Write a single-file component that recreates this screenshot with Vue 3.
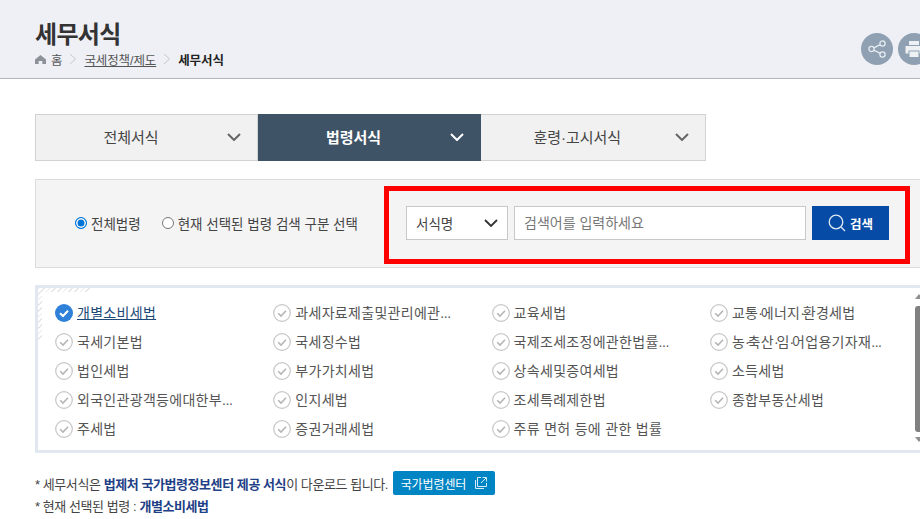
<script setup>
const split = (s) => s.split(/(·|\.\.\.)/).filter(Boolean)
const laws = [
  { name: '개별소비세법', on: true },
  { name: '과세자료제출및관리에관...' },
  { name: '교육세법' },
  { name: '교통·에너지·환경세법' },
  { name: '국세기본법' },
  { name: '국세징수법' },
  { name: '국제조세조정에관한법률...' },
  { name: '농·축산·임·어업용기자재...' },
  { name: '법인세법' },
  { name: '부가가치세법' },
  { name: '상속세및증여세법' },
  { name: '소득세법' },
  { name: '외국인관광객등에대한부...' },
  { name: '인지세법' },
  { name: '조세특례제한법' },
  { name: '종합부동산세법' },
  { name: '주세법' },
  { name: '증권거래세법' },
  { name: '주류 면허 등에 관한 법률' },
].map((l) => ({ ...l, parts: split(l.name) }))
const tabs = [
  { name: '전체서식' },
  { name: '법령서식', on: true },
  { name: '훈령·고시서식' },
]
</script>

<template>
  <div class="page">
    <header class="top">
      <div class="top-text">
        <h1 class="title">세무서식</h1>
        <nav class="crumbs">
          <svg class="home" viewBox="0 0 12 12" width="11" height="11"><path d="M6 1 L12 6 V11 H8 V7.5 H4 V11 H0 V6 Z" fill="#8d9298" /></svg>
          <span class="crumb">홈</span>
          <svg class="sep" viewBox="0 0 8 12" width="8" height="12"><path d="M1 1 L6.5 6 L1 11" fill="none" stroke="#c4c7cc" /></svg>
          <a class="crumb link">국세정책/제도</a>
          <svg class="sep" viewBox="0 0 8 12" width="8" height="12"><path d="M1 1 L6.5 6 L1 11" fill="none" stroke="#c4c7cc" /></svg>
          <strong class="crumb current">세무서식</strong>
        </nav>
      </div>
      <div class="top-actions">
        <span class="round">
          <svg viewBox="0 0 20 20" width="20" height="20" fill="none" stroke="#e6ebf0" stroke-width="1.3">
            <circle cx="15.5" cy="4.5" r="2.6" /><circle cx="4.5" cy="10" r="2.6" /><circle cx="15.5" cy="15.5" r="2.6" />
            <path d="M6.8 8.8 L13.2 5.7 M6.8 11.2 L13.2 14.3" />
          </svg>
        </span>
        <span class="round">
          <svg viewBox="0 0 20 20" width="20" height="20" fill="#eef1f4">
            <path d="M5 2 H15 V6 H5 Z M1.5 7 H18.5 V14.5 H15.5 V11.5 H4.5 V14.5 H1.5 Z M5.5 12.5 H14.5 V18 H5.5 Z" />
          </svg>
        </span>
      </div>
    </header>

    <main class="main">
      <div class="tabs">
        <button v-for="t in tabs" :key="t.name" class="tab" :class="{ 'tab-on': t.on }">
          <span>{{ t.name }}</span>
          <svg class="tab-arrow" viewBox="0 0 14 8" width="14" height="8"><path d="M1 1 L7 7 L13 1" fill="none" stroke="currentColor" stroke-width="2" /></svg>
        </button>
      </div>

      <section class="panel">
        <div class="radios">
          <label class="radio"><span class="dot dot-on"></span>전체법령</label>
          <label class="radio"><span class="dot"></span>현재 선택된 법령 검색 구분 선택</label>
        </div>
        <div class="search">
          <div class="select">
            <span>서식명</span>
            <svg viewBox="0 0 14 8" width="14" height="8"><path d="M1 1 L7 7 L13 1" fill="none" stroke="#333" stroke-width="1.8" /></svg>
          </div>
          <input class="input" placeholder="검색어를 입력하세요" />
          <button class="go">
            <svg viewBox="0 0 18 18" width="18" height="18" fill="none" stroke="#dfe8f5" stroke-width="1.3"><circle cx="8" cy="8" r="6.8" /><path d="M13 13 L17 17" /></svg>
            <span>검색</span>
          </button>
        </div>
      </section>

      <section class="list">
        <div class="hatch"></div>
        <ul class="grid">
          <li v-for="l in laws" :key="l.name" class="law" :class="{ 'law-on': l.on }">
            <svg v-if="l.on" viewBox="0 0 18 18" width="18" height="18"><circle cx="9" cy="9" r="9" fill="#2f80d8" /><path d="M5 9.2 L8 12 L13 6.8" fill="none" stroke="#fff" stroke-width="2" /></svg>
            <svg v-else viewBox="0 0 18 18" width="18" height="18"><circle cx="9" cy="9" r="8.3" fill="#fff" stroke="#c6c6c6" stroke-width="1.2" /><path d="M5.2 9.2 L8 12 L13 6.8" fill="none" stroke="#b5b5b5" stroke-width="1.6" /></svg>
            <span class="law-name"><template v-for="(p, i) in l.parts" :key="i"><span v-if="p === '·'" class="mid">·</span><span v-else-if="p === '...'" class="dots">...</span><template v-else>{{ p }}</template></template></span>
          </li>
        </ul>
        <div class="scrollbar">
          <span class="arr-up"></span>
          <span class="thumb"></span>
          <span class="arr-down"></span>
        </div>
      </section>

      <div class="notes">
        <p class="note">* 세무서식은 <b>법제처 국가법령정보센터 제공 서식</b>이 다운로드 됩니다.<a class="ext">국가법령센터<svg viewBox="0 0 12 12" width="12" height="12" fill="none" stroke="#d5edf8"><path d="M0.5 3 V11.5 H9 M6 0.5 H2.5 V9.5 H11.5 V6 M6 6 L11 1 M7.5 0.5 H11.5 V4.5" /></svg></a></p>
        <p class="note note2">* 현재 선택된 법령 : <b>개별소비세법</b></p>
      </div>
    </main>
  </div>
</template>

<style>
html, body { margin: 0; overflow: hidden; background: #fff; }
</style>

<style scoped>
.page {
  width: 960px;
  height: 519px;
  overflow: hidden;
  font-family: "Liberation Sans", "Noto Sans CJK KR", sans-serif;
  color: #444;
}
.top {
  box-sizing: border-box;
  height: 79px;
  padding: 20px 0 0 35px;
  display: flex;
  justify-content: space-between;
  background: #eff0f5;
  border-bottom: 1px solid #b0b5bf;
}
.title {
  margin: 0;
  font-size: 24px;
  line-height: 30px;
  font-weight: 700;
  color: #333;
  letter-spacing: -0.7px;
}
.crumbs {
  display: flex;
  align-items: center;
  height: 18px;
  font-size: 12.5px;
  letter-spacing: -0.1px;
  color: #555;
}
.home { margin-right: 5px; }
.sep { margin: 0 7px; }
.link { text-decoration: underline; }
.current { color: #222; font-weight: 700; }
.top-actions {
  display: flex;
  gap: 5px;
  padding-top: 13px;
  margin-right: 30px;
}
.round {
  width: 32px;
  height: 32px;
  border-radius: 50%;
  background: #8ea0b2;
  display: flex;
  align-items: center;
  justify-content: center;
}
.main { padding: 35px 0 0 35px; }
.tabs { display: flex; }
.tab {
  box-sizing: border-box;
  position: relative;
  flex: none;
  width: 223px;
  height: 47px;
  background: #f1f1f1;
  border: 1px solid #d2d2d2;
  font: inherit;
  font-size: 15px;
  letter-spacing: -0.05px;
  color: #444;
  padding: 0 31px 2px 0;
  margin: 0;
  display: flex;
  align-items: center;
  justify-content: center;
}
.tab:last-child { width: 224.5px; }
.tab + .tab { border-left: 0; }
.tab-on {
  background: #3f5367;
  border-color: #3f5367;
  color: #fff;
  font-weight: 700;
}
.tab-arrow {
  position: absolute;
  right: 16px;
  top: 18px;
  color: #666;
}
.tab-on .tab-arrow { color: #fff; }
.panel {
  box-sizing: border-box;
  height: 89px;
  margin-top: 18px;
  background: #f4f4f4;
  border: 1px solid #dcdcdc;
  display: flex;
  align-items: center;
  padding-left: 39px;
}
.radios { display: flex; gap: 21px; width: 309px; margin-bottom: 2px; font-size: 13.5px; color: #444; }
.radio { display: flex; align-items: center; gap: 4px; white-space: nowrap; }
.dot {
  box-sizing: border-box;
  width: 12px;
  height: 12px;
  border-radius: 50%;
  border: 1px solid #767676;
  background: #fff;
}
.dot-on {
  border: 1px solid #0075d9;
  box-shadow: inset 0 0 0 1.5px #fff;
  background: #0075d9;
}
.search {
  box-sizing: border-box;
  width: 526px;
  height: 78px;
  margin-top: 3px;
  border: 5px solid #ff0000;
  display: flex;
  align-items: center;
  padding: 0 0 4px 17px;
  gap: 6px;
}
.select {
  box-sizing: border-box;
  width: 102px;
  height: 34px;
  background: #fff;
  border: 1px solid #c8c8c8;
  padding: 0 9px;
  display: flex;
  align-items: center;
  justify-content: space-between;
  font-size: 13.5px;
  color: #444;
}
.input {
  box-sizing: border-box;
  width: 292px;
  height: 34px;
  border: 1px solid #c8c8c8;
  background: #fff;
  padding: 0 9px;
  font: inherit;
  font-size: 14px;
}
.input::placeholder { color: #777; }
.go {
  box-sizing: border-box;
  width: 77px;
  height: 34px;
  background: #064ba5;
  border: 0;
  padding: 0;
  color: #fff;
  font: inherit;
  font-size: 12.5px;
  font-weight: 700;
  display: flex;
  align-items: center;
  justify-content: center;
  gap: 4px;
}
.list {
  box-sizing: border-box;
  position: relative;
  height: 168px;
  margin-top: 17px;
  border: 3px solid #e2e8f0;
  padding: 10px 0 0 17px;
}
.hatch {
  position: absolute;
  left: 0;
  top: 0;
  width: 54px;
  height: 52px;
  background: repeating-linear-gradient(135deg, #e6e6e6 0 1px, #fff 1px 4px);
  clip-path: polygon(0 0, 100% 0, 98% 4px, 4px 4px, 4px 98%, 0 100%);
}
.grid {
  position: relative;
  list-style: none;
  margin: 0;
  padding: 0;
  display: grid;
  grid-template-columns: repeat(4, 218.3px);
  grid-auto-rows: 29px;
}
.law {
  display: flex;
  align-items: center;
  gap: 4px;
  font-size: 14px;
  letter-spacing: 0.3px;
  color: #555;
  white-space: nowrap;
}
.law-name { padding-bottom: 2px; }
.mid { letter-spacing: -2.5px; margin-right: 0.3px; }
.dots { letter-spacing: -0.4px; }
.law-on { color: #1d4a78; }
.law-on .law-name { text-decoration: underline; }
.scrollbar {
  position: absolute;
  left: 877px;
  top: 3px;
  width: 8px;
  height: 150px;
}
.thumb {
  position: absolute;
  left: 0;
  top: 15px;
  width: 8px;
  height: 126px;
  border-radius: 3px;
  background: #808080;
}
.arr-up, .arr-down {
  position: absolute;
  left: 0;
  width: 0;
  height: 0;
  border-left: 4px solid transparent;
  border-right: 4px solid transparent;
}
.arr-up { top: 3px; border-bottom: 5px solid #909090; }
.arr-down { top: 146px; border-top: 5px solid #909090; }
.notes { margin-top: 18px; font-size: 13px; letter-spacing: -0.43px; color: #444; }
.note { margin: 0; height: 24px; display: flex; align-items: center; white-space: pre; }
.note2 { margin-top: 1px; height: 18px; }
.note b { color: #1f3f86; font-weight: 700; }
.ext {
  box-sizing: border-box;
  width: 102px;
  height: 24px;
  margin-left: 5px;
  background: #0085c4;
  border-radius: 2px;
  color: #fff;
  font-size: 12px;
  letter-spacing: -0.1px;
  display: flex;
  align-items: center;
  justify-content: center;
  gap: 9px;
}
</style>
